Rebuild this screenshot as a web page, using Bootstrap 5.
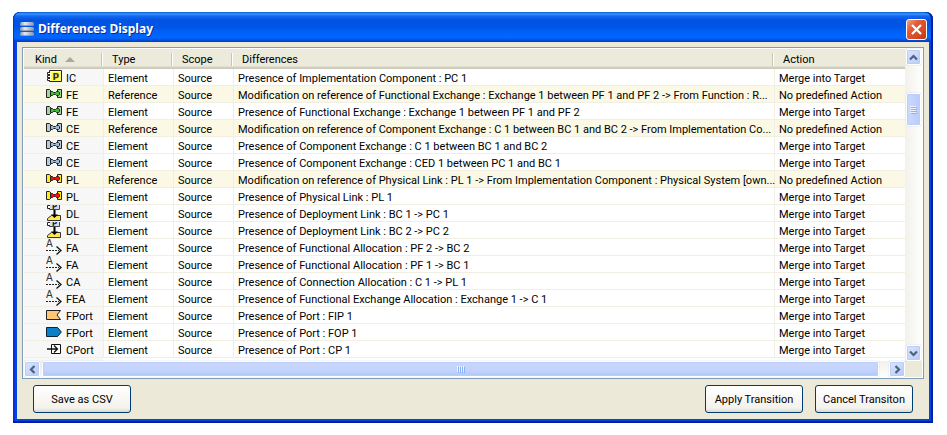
<!DOCTYPE html>
<html lang="en">
<head>
<meta charset="utf-8">
<meta name="viewport" content="width=device-width, initial-scale=1">
<title>Differences Display</title>
<link href="https://cdn.jsdelivr.net/npm/bootstrap@5.3.0/dist/css/bootstrap.min.css" rel="stylesheet">
<style>
body { background: #fff; font-family: Roboto, "Noto Sans", sans-serif; font-size: 11px; line-height: 16px; color: #000; padding: 12px 14px 12px 13px; }
.xp-window { background: #0046e0; border-radius: 7px 7px 0 0; padding: 0 4px 4px; box-shadow: inset -2px -2px 0 #001ea0, inset 2px 0 0 #0831d9; }
.xp-title { height: 30px; margin: 0 -4px; padding: 4px 6px 0 7px; border-radius: 7px 7px 0 0; background: linear-gradient(#0a5ad8 0, #3a94ff 2px, #1269f0 4px, #0353e0 8px, #0054e6 14px, #0062fb 21px, #0066ff 26px, #0050dc 28px, #003cc4 30px); box-shadow: inset 1px 0 0 #0831d9, inset -2px 0 0 #001ea0; }
.xp-title h1 { font: bold 12px/20px "Noto Sans", sans-serif; color: #fff; text-shadow: 1px 1px 0 #0a2a90; }
.xp-close { width: 21px; height: 21px; border: 1px solid #fff; border-radius: 3px; background: linear-gradient(135deg, #f0a088 0, #e25a34 35%, #d84a20 70%, #b83a14 100%); }
.xp-client { background: #ece9d8; padding: 5px 5px 6px; }
.grid-box { border: 1px solid #7f9db9; background: #fff; padding: 1px; display: grid; grid-template-columns: minmax(0, 1fr) 17px; }
.diffs { table-layout: fixed; width: 100%; border-collapse: separate; border-spacing: 0; }
.diffs th { height: 20px; line-height: 14px; font-weight: 400; padding: 0 0 0 9px; background: linear-gradient(#ebeadb 0, #ebeadb 17px, #d6d2c2 18px, #cbc7b8 20px); }
.diffs th > span { display: flex; align-items: center; height: 13px; margin: 4px 0 3px; border-right: 1px solid #fff; box-shadow: inset -1px 0 0 #c7c5b2; }
.diffs th:first-child { padding-left: 11px; }
.diffs th:last-child > span { border: 0; box-shadow: none; }
.diffs td { height: 17px; padding: 3px 0 0 4px; line-height: 13px; border-bottom: 1px solid #f1efe2; border-left: 1px solid #f1efe2; white-space: nowrap; }
.diffs td:first-child { padding-left: 22px; border-left: 0; background: #f7f7f7; }
.diffs tr.changed td { background: #fbf9e6; }
.c-kind { width: 79px; } .c-type { width: 70px; } .c-scope { width: 60px; } .c-action { width: 131px; }
.kind-cell { display: flex; gap: 4px; height: 13px; }
.kind-cell svg { width: 16px; height: 16px; flex: none; margin-top: -3px; }
.g { --a: #a0d8a0; --b: #48b838; } .b { --a: #b4ccdc; --b: #9cb8d8; } .r { --a: #ffee10; --b: #f01010; }
.v-bar { display: flex; flex-direction: column; background: linear-gradient(90deg, #f3f1ec, #fefefb); padding: 0 1px; }
.h-bar { display: flex; background: linear-gradient(#f3f1ec, #fefefb); }
.bar-btn, .bar-thumb { flex: none; width: 16px; height: 16px; border: 1px solid #fff; border-radius: 2px; padding: 0; background: linear-gradient(135deg, #dbe5fe, #b8cbf8); box-shadow: inset 0 0 0 1px #bccdf8, 0 0 1px #8aa8dc; display: flex; align-items: center; justify-content: center; }
.v-bar .bar-btn, .v-bar .bar-thumb { width: 15px; }
.v-bar .bar-thumb { height: 33px; margin-top: 28px; background: linear-gradient(90deg, #cbd9fd, #b9ccfa); }
.h-bar .bar-thumb { flex: 1 1 auto; margin: 0 10px 0 2px; background: linear-gradient(#c9d7fc, #c4d3fd 60%, #b0c6f8); }
.bar-end { background: #ece9d8; }
.row-rest { height: 3px; background: linear-gradient(90deg, #f7f7f7 79px, #fff 79px); }
.xp-btn { height: 28px; width: 98px; padding: 1px 0 0; font-size: 11px; line-height: 16px; color: #000; border: 1px solid #003c74; border-radius: 3px; background: linear-gradient(#fff, #f3f2ec 85%, #dcd8cc); }
.xp-btn:hover { color: #000; border-color: #003c74; }
.xp-foot { padding: 6px 11px 0; }
</style>
<script src="https://cdn.jsdelivr.net/npm/bootstrap@5.3.0/dist/js/bootstrap.bundle.min.js"></script>
</head>
<body>
<svg class="d-none" aria-hidden="true">
  <symbol id="i-comp" viewBox="0 0 16 16"><path d="M3.500 1.500h12v11h-12z" fill="#ffff50" stroke="#222"/><path d="M4.500 12V2.500H15" fill="none" stroke="#ffffc0"/><path d="M4 3.500H1.500v2H4M4 6.500H1.500v2H4M4 9.500H1.500v2H4" fill="#fff" stroke="#222"/><text x="6.500" y="10.500" font-family="DejaVu Sans" font-size="9" font-weight="bold" fill="#333">P</text></symbol>
  <symbol id="i-link" viewBox="0 0 16 16"><path d="M.5 3.500h3l1.500 1.500v5l-1.500 1.500h-3z" fill="var(--a)" stroke="#222"/><path d="M15.500 3.500h-4v8h4z" fill="var(--a)" stroke="#222"/><path d="M4.500 5.500h2l1 1h2l1-1h2l1 1v2l-1 1h-2l-1-1h-2l-1 1h-2z" fill="var(--b)" stroke="#222"/></symbol>
  <symbol id="i-dep" viewBox="0 0 16 16"><path d="M3.500-2v6.500h10V-2" fill="#d3deec" stroke="#444"/><path d="M4 .5H1.500v3H4" fill="#fff" stroke="#222"/><text x="6" y="3.500" font-family="DejaVu Sans" font-size="7" font-weight="bold" fill="#222">P</text><path d="M1.500 15.500v-2l4-3h9v5z" fill="#ffe94a" stroke="#333"/><path d="M8.500 5v6" stroke="#000" stroke-width="2"/><path d="M5 9.500h7l-3.500 3.500z" fill="#000"/></symbol>
  <symbol id="i-alloc" viewBox="0 0 16 16"><text x="0" y="8" font-family="DejaVu Sans Condensed" font-size="11" fill="#333">A</text><path d="M0 11.500h13" stroke="#222" stroke-dasharray="2 1"/><path d="M10.500 7.500l4.500 4-4.500 4" fill="none" stroke="#111" stroke-width="1.300"/></symbol>
  <symbol id="i-in" viewBox="0 0 16 16"><path d="M.5 3.500h14l-3.500 4.500 3.500 4.500H.5z" fill="#ffc673" stroke="#222"/></symbol>
  <symbol id="i-out" viewBox="0 0 16 16"><path d="M.5 3.500h11l3.500 4v1l-3.500 4H.5z" fill="#0a80c8" stroke="#123"/></symbol>
  <symbol id="i-port" viewBox="0 0 16 16"><path d="M5.500 3.500h9v9h-9z" fill="#fff" stroke="#111"/><path d="M1 8h10.500M8 4.500L11.500 8 8 11.500" fill="none" stroke="#111" stroke-width="1.300"/></symbol>
</svg>

<main class="xp-window">
  <header class="xp-title d-flex align-items-center gap-1">
    <svg width="14" height="16" viewBox="0 0 14 16" aria-hidden="true"><defs><linearGradient id="disk"><stop offset="0" stop-color="#7f90ac"/><stop offset=".35" stop-color="#e6eaf0"/><stop offset="1" stop-color="#8492ac"/></linearGradient></defs><g fill="url(#disk)"><rect y="1" width="14" height="4" rx="1.500"/><rect y="6" width="14" height="4" rx="1.500"/><rect y="11" width="14" height="4" rx="1.500"/></g><path d="M1 4.500h12M1 9.500h12M1 14.500h12" stroke="#6c7c98" stroke-opacity=".6"/></svg>
    <h1 class="mb-0 flex-grow-1">Differences Display</h1>
    <button type="button" class="xp-close p-0 d-flex align-items-center justify-content-center" aria-label="Close"><svg width="13" height="13" viewBox="0 0 13 13"><path d="M2 2l9 9M11 2l-9 9" stroke="#fff" stroke-width="2.200"/></svg></button>
  </header>

  <div class="xp-client">
    <div class="grid-box">
      <div>
        <table class="diffs">
          <colgroup><col class="c-kind"><col class="c-type"><col class="c-scope"><col><col class="c-action"></colgroup>
          <thead><tr>
            <th scope="col"><span>Kind <svg class="ms-2" width="10" height="5" viewBox="0 0 10 5" aria-hidden="true"><path d="M0 5l5-5 5 5z" fill="#aca899"/></svg></span></th>
            <th scope="col"><span>Type</span></th><th scope="col"><span>Scope</span></th><th scope="col"><span>Differences</span></th><th scope="col"><span>Action</span></th>
          </tr></thead>
          <tbody>
            <tr><td><div class="kind-cell"><svg><use href="#i-comp"/></svg>IC</div></td><td>Element</td><td>Source</td><td>Presence of Implementation Component : PC 1</td><td>Merge into Target</td></tr>
            <tr class="changed"><td><div class="kind-cell"><svg class="g"><use href="#i-link"/></svg>FE</div></td><td>Reference</td><td>Source</td><td>Modification on reference of Functional Exchange : Exchange 1 between PF 1 and PF 2 -&gt; From Function : R...</td><td>No predefined Action</td></tr>
            <tr><td><div class="kind-cell"><svg class="g"><use href="#i-link"/></svg>FE</div></td><td>Element</td><td>Source</td><td>Presence of Functional Exchange : Exchange 1 between PF 1 and PF 2</td><td>Merge into Target</td></tr>
            <tr class="changed"><td><div class="kind-cell"><svg class="b"><use href="#i-link"/></svg>CE</div></td><td>Reference</td><td>Source</td><td>Modification on reference of Component Exchange : C 1 between BC 1 and BC 2 -&gt; From Implementation Co...</td><td>No predefined Action</td></tr>
            <tr><td><div class="kind-cell"><svg class="b"><use href="#i-link"/></svg>CE</div></td><td>Element</td><td>Source</td><td>Presence of Component Exchange : C 1 between BC 1 and BC 2</td><td>Merge into Target</td></tr>
            <tr><td><div class="kind-cell"><svg class="b"><use href="#i-link"/></svg>CE</div></td><td>Element</td><td>Source</td><td>Presence of Component Exchange : CED 1 between PC 1 and BC 1</td><td>Merge into Target</td></tr>
            <tr class="changed"><td><div class="kind-cell"><svg class="r"><use href="#i-link"/></svg>PL</div></td><td>Reference</td><td>Source</td><td>Modification on reference of Physical Link : PL 1 -&gt; From Implementation Component : Physical System [own...</td><td>No predefined Action</td></tr>
            <tr><td><div class="kind-cell"><svg class="r"><use href="#i-link"/></svg>PL</div></td><td>Element</td><td>Source</td><td>Presence of Physical Link : PL 1</td><td>Merge into Target</td></tr>
            <tr><td><div class="kind-cell"><svg><use href="#i-dep"/></svg>DL</div></td><td>Element</td><td>Source</td><td>Presence of Deployment Link : BC 1 -&gt; PC 1</td><td>Merge into Target</td></tr>
            <tr><td><div class="kind-cell"><svg><use href="#i-dep"/></svg>DL</div></td><td>Element</td><td>Source</td><td>Presence of Deployment Link : BC 2 -&gt; PC 2</td><td>Merge into Target</td></tr>
            <tr><td><div class="kind-cell"><svg><use href="#i-alloc"/></svg>FA</div></td><td>Element</td><td>Source</td><td>Presence of Functional Allocation : PF 2 -&gt; BC 2</td><td>Merge into Target</td></tr>
            <tr><td><div class="kind-cell"><svg><use href="#i-alloc"/></svg>FA</div></td><td>Element</td><td>Source</td><td>Presence of Functional Allocation : PF 1 -&gt; BC 1</td><td>Merge into Target</td></tr>
            <tr><td><div class="kind-cell"><svg><use href="#i-alloc"/></svg>CA</div></td><td>Element</td><td>Source</td><td>Presence of Connection Allocation : C 1 -&gt; PL 1</td><td>Merge into Target</td></tr>
            <tr><td><div class="kind-cell"><svg><use href="#i-alloc"/></svg>FEA</div></td><td>Element</td><td>Source</td><td>Presence of Functional Exchange Allocation : Exchange 1 -&gt; C 1</td><td>Merge into Target</td></tr>
            <tr><td><div class="kind-cell"><svg><use href="#i-in"/></svg>FPort</div></td><td>Element</td><td>Source</td><td>Presence of Port : FIP 1</td><td>Merge into Target</td></tr>
            <tr><td><div class="kind-cell"><svg><use href="#i-out"/></svg>FPort</div></td><td>Element</td><td>Source</td><td>Presence of Port : FOP 1</td><td>Merge into Target</td></tr>
            <tr><td><div class="kind-cell"><svg><use href="#i-port"/></svg>CPort</div></td><td>Element</td><td>Source</td><td>Presence of Port : CP 1</td><td>Merge into Target</td></tr>
          </tbody>
        </table>
        <div class="row-rest"></div>
      </div>
      <div class="v-bar">
        <button type="button" class="bar-btn" aria-label="Scroll up"><svg width="9" height="7" viewBox="0 0 9 7"><path d="M1 5.500L4.500 2 8 5.500" fill="none" stroke="#4d6185" stroke-width="2.200"/></svg></button>
        <div class="bar-thumb"><svg width="7" height="8" viewBox="0 0 7 8"><path d="M0 .5h6M0 2.500h6M0 4.500h6M0 6.500h6" stroke="#eef4fe"/><path d="M1 1.500h6M1 3.500h6M1 5.500h6M1 7.500h6" stroke="#8cb0f8"/></svg></div>
        <button type="button" class="bar-btn mt-auto" aria-label="Scroll down"><svg width="9" height="7" viewBox="0 0 9 7"><path d="M1 1.500L4.500 5 8 1.500" fill="none" stroke="#4d6185" stroke-width="2.200"/></svg></button>
      </div>
      <div class="h-bar">
        <button type="button" class="bar-btn" aria-label="Scroll left"><svg width="7" height="9" viewBox="0 0 7 9"><path d="M5.500 1L2 4.500 5.500 8" fill="none" stroke="#4d6185" stroke-width="2.200"/></svg></button>
        <div class="bar-thumb"><svg width="8" height="7" viewBox="0 0 8 7"><path d="M.5 0v6M2.500 0v6M4.500 0v6M6.500 0v6" stroke="#eef4fe"/><path d="M1.500 1v6M3.500 1v6M5.500 1v6M7.500 1v6" stroke="#8cb0f8"/></svg></div>
        <button type="button" class="bar-btn" aria-label="Scroll right"><svg width="7" height="9" viewBox="0 0 7 9"><path d="M1.500 1L5 4.500 1.500 8" fill="none" stroke="#4d6185" stroke-width="2.200"/></svg></button>
      </div>
      <div class="bar-end"></div>
    </div>
    <footer class="xp-foot d-flex justify-content-between">
      <button type="button" class="btn xp-btn">Save as CSV</button>
      <div class="d-flex gap-2"><button type="button" class="btn xp-btn me-1">Apply Transition</button><button type="button" class="btn xp-btn">Cancel Transiton</button></div>
    </footer>
  </div>
</main>
</body>
</html>
